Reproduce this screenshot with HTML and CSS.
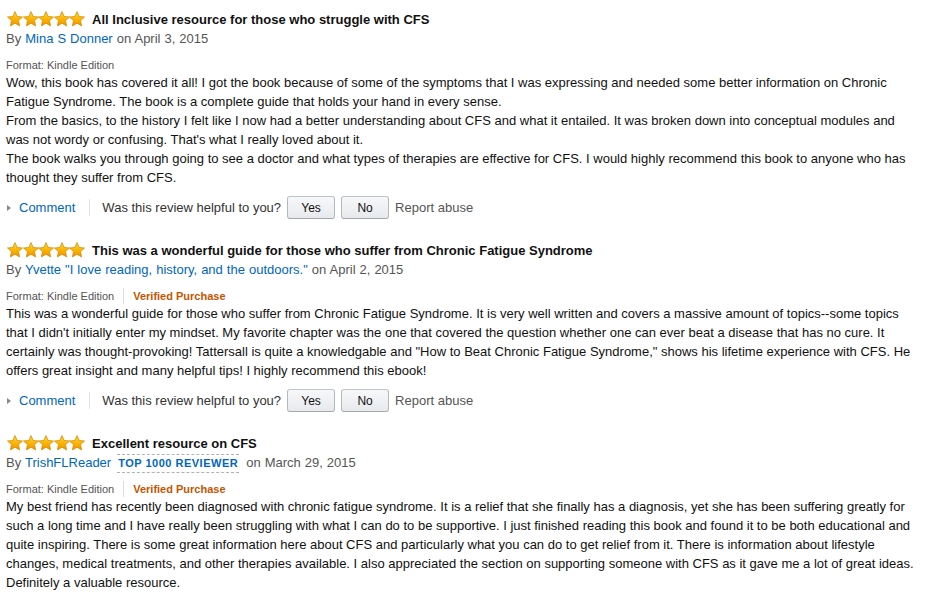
FILE: index.html
```html
<!DOCTYPE html>
<html>
<head>
<meta charset="utf-8">
<link rel="stylesheet" href="styles.css">
</head>
<body>
<svg width="0" height="0" class="defs">
  <defs>
    <linearGradient id="sg" x1="0" y1="0" x2="0" y2="1">
      <stop offset="0" stop-color="#ffd84a"/>
      <stop offset="0.55" stop-color="#f8b400"/>
      <stop offset="1" stop-color="#f09000"/>
    </linearGradient>
    <symbol id="star" viewBox="0 0 16 16">
      <path d="M8 0.6 L10.2 5.5 L15.5 6.0 L11.5 9.6 L12.6 14.9 L8 12.2 L3.4 14.9 L4.5 9.6 L0.5 6.0 L5.8 5.5 Z" fill="url(#sg)" stroke="#d98b00" stroke-width="0.8" stroke-linejoin="round"/>
    </symbol>
  </defs>
</svg>
<div class="reviews">

  <div class="review">
    <div class="title-row">
      <span class="stars"><svg><use href="#star"/></svg><svg><use href="#star"/></svg><svg><use href="#star"/></svg><svg><use href="#star"/></svg><svg><use href="#star"/></svg></span>
      <span class="title">All Inclusive resource for those who struggle with CFS</span>
    </div>
    <div class="byline">By <a class="link">Mina S Donner</a> on April 3, 2015</div>
    <div class="format"><span>Format: Kindle Edition</span></div>
    <div class="body">Wow, this book has covered it all! I got the book because of some of the symptoms that I was expressing and needed some better information on Chronic Fatigue Syndrome. The book is a complete guide that holds your hand in every sense.<br>From the basics, to the history I felt like I now had a better understanding about CFS and what it entailed. It was broken down into conceptual modules and was not wordy or confusing. That's what I really loved about it.<br>The book walks you through going to see a doctor and what types of therapies are effective for CFS. I would highly recommend this book to anyone who has thought they suffer from CFS.</div>
    <div class="actions">
      <span class="tri"></span><a class="link">Comment</a>
      <span class="sep"></span>
      <span class="helpful">Was this review helpful to you?</span>
      <button class="btn">Yes</button>
      <button class="btn">No</button>
      <span class="report">Report abuse</span>
    </div>
  </div>

  <div class="review">
    <div class="title-row">
      <span class="stars"><svg><use href="#star"/></svg><svg><use href="#star"/></svg><svg><use href="#star"/></svg><svg><use href="#star"/></svg><svg><use href="#star"/></svg></span>
      <span class="title">This was a wonderful guide for those who suffer from Chronic Fatigue Syndrome</span>
    </div>
    <div class="byline">By <a class="link">Yvette "I love reading, history, and the outdoors."</a> on April 2, 2015</div>
    <div class="format"><span>Format: Kindle Edition</span><span class="vsep"></span><span class="verified">Verified Purchase</span></div>
    <div class="body">This was a wonderful guide for those who suffer from Chronic Fatigue Syndrome. It is very well written and covers a massive amount of topics--some topics that I didn't initially enter my mindset. My favorite chapter was the one that covered the question whether one can ever beat a disease that has no cure. It certainly was thought-provoking! Tattersall is quite a knowledgable and "How to Beat Chronic Fatigue Syndrome," shows his lifetime experience with CFS. He offers great insight and many helpful tips! I highly recommend this ebook!</div>
    <div class="actions">
      <span class="tri"></span><a class="link">Comment</a>
      <span class="sep"></span>
      <span class="helpful">Was this review helpful to you?</span>
      <button class="btn">Yes</button>
      <button class="btn">No</button>
      <span class="report">Report abuse</span>
    </div>
  </div>

  <div class="review">
    <div class="title-row">
      <span class="stars"><svg><use href="#star"/></svg><svg><use href="#star"/></svg><svg><use href="#star"/></svg><svg><use href="#star"/></svg><svg><use href="#star"/></svg></span>
      <span class="title">Excellent resource on CFS</span>
    </div>
    <div class="byline">By <a class="link">TrishFLReader</a> <span class="badge">TOP 1000 REVIEWER</span> on March 29, 2015</div>
    <div class="format"><span>Format: Kindle Edition</span><span class="vsep"></span><span class="verified">Verified Purchase</span></div>
    <div class="body">My best friend has recently been diagnosed with chronic fatigue syndrome. It is a relief that she finally has a diagnosis, yet she has been suffering greatly for such a long time and I have really been struggling with what I can do to be supportive. I just finished reading this book and found it to be both educational and quite inspiring. There is some great information here about CFS and particularly what you can do to get relief from it. There is information about lifestyle changes, medical treatments, and other therapies available. I also appreciated the section on supporting someone with CFS as it gave me a lot of great ideas. Definitely a valuable resource.</div>
  </div>

</div>
</body>
</html>
```

FILE: styles.css
```css
html, body {
  margin: 0;
  padding: 0;
  background: #ffffff;
}
body {
  font-family: "Liberation Sans", Arial, sans-serif;
  font-size: 13px;
  color: #111111;
}
.defs {
  position: absolute;
  width: 0;
  height: 0;
}
.reviews {
  padding: 9px 6px 0 6px;
  width: 910px;
}
.review {
  margin-bottom: 21px;
}
.title-row {
  display: flex;
  align-items: center;
  height: 20px;
}
.stars {
  display: flex;
  margin-left: 1px;
  margin-right: 7px;
}
.stars svg {
  width: 16px;
  height: 16px;
  display: block;
  margin-right: -0.4px;
}
.title {
  font-weight: bold;
  font-size: 13px;
  color: #111111;
}
.byline {
  line-height: 20px;
  height: 20px;
  color: #555555;
  white-space: nowrap;
  word-spacing: 0.4px;
}
.link {
  color: #0066c0;
  text-decoration: none;
}
.badge {
  display: inline-block;
  font-size: 11px;
  font-weight: bold;
  color: #0066c0;
  letter-spacing: 0.5px;
  word-spacing: 0;
  line-height: 13px;
  padding: 2px 1px 2px 1px;
  border-top: 1px dashed #a9b3c0;
  border-bottom: 1px dashed #a9b3c0;
  margin: 0 3px 0 2px;
}
.format {
  margin-top: 8px;
  height: 16px;
  line-height: 16px;
  font-size: 11px;
  color: #555555;
  display: flex;
  align-items: center;
}
.vsep {
  display: inline-block;
  width: 1px;
  height: 16px;
  background: #dddddd;
  margin: 0 9px 0 9px;
}
.verified {
  color: #c45500;
  font-weight: bold;
}
.body {
  line-height: 19px;
  color: #111111;
}
.actions {
  margin-top: 9px;
  height: 23px;
  display: flex;
  align-items: center;
}
.tri {
  width: 0;
  height: 0;
  border-top: 3.5px solid transparent;
  border-bottom: 3.5px solid transparent;
  border-left: 4px solid #888888;
  margin: 0 8px 0 1px;
}
.sep {
  width: 1px;
  height: 17px;
  background: #e3e3e3;
  margin: 0 12px 0 14px;
}
.helpful {
  color: #333333;
  margin-right: 6px;
}
.btn {
  font-family: "Liberation Sans", Arial, sans-serif;
  font-size: 12px;
  color: #111111;
  height: 23px;
  width: 48px;
  padding: 0;
  border: 1px solid #adb1b8;
  border-color: #c0c3c8 #b4b8bd #a4a8ae;
  border-radius: 3px;
  background: linear-gradient(#f7f8fa, #e7e9ec);
  margin-right: 6px;
}
.report {
  color: #555555;
}
```
